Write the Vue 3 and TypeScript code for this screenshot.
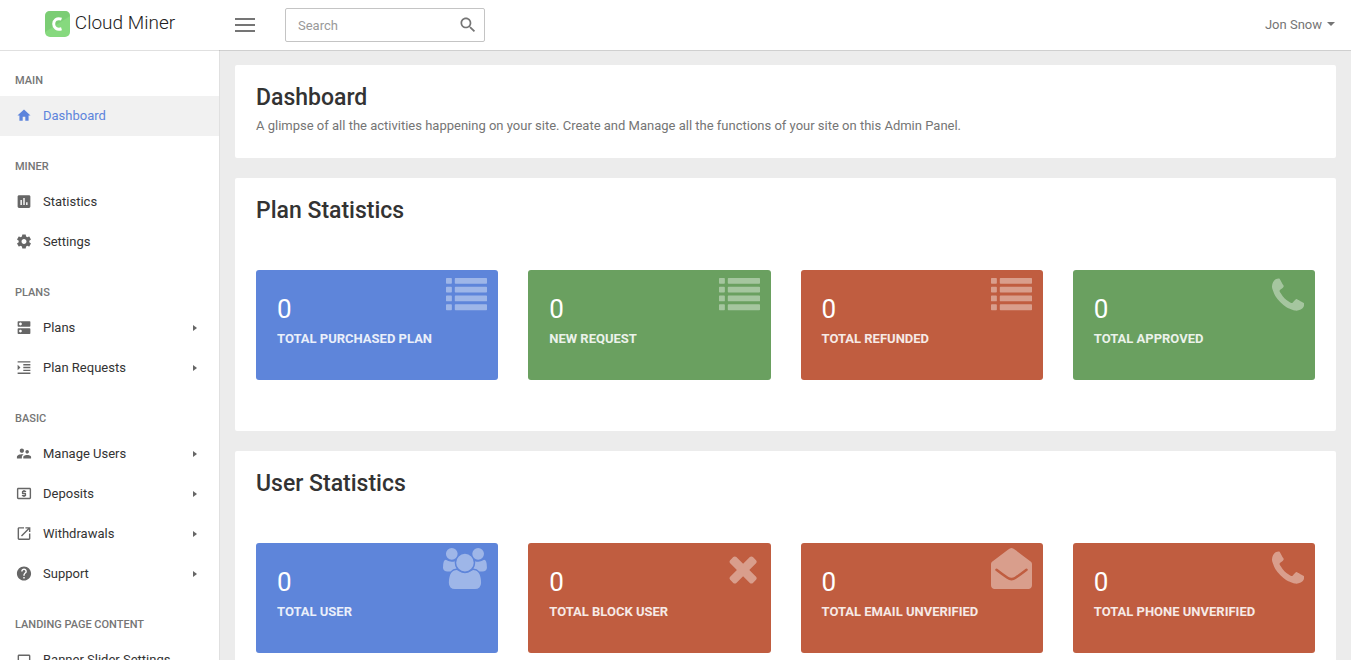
<script setup lang="ts">
import { ref } from 'vue'

interface NavItem {
  label: string
  icon: string
  viewBox?: string
  expandable?: boolean
  active?: boolean
}
interface NavGroup {
  title: string
  items: NavItem[]
}
type Glyph = 'list' | 'phone' | 'users' | 'times' | 'mail'
interface Stat {
  label: string
  value: number
  tone: 'blue' | 'green' | 'red'
  glyph: Glyph
}
interface Section {
  title: string
  stats: Stat[]
}

const query = ref('')

const groups: NavGroup[] = [
  {
    title: 'Main',
    items: [
      {
        label: 'Dashboard',
        icon: 'M10 20v-6h4v6h5v-8h3L12 3 2 12h3v8z',
        viewBox: '-1 -1 26 26',
        active: true,
      },
    ],
  },
  {
    title: 'Miner',
    items: [
      {
        label: 'Statistics',
        icon: 'M19 3H5c-1.100 0-2 .9-2 2v14c0 1.100.9 2 2 2h14c1.100 0 2-.9 2-2V5c0-1.100-.9-2-2-2zM9 17H7v-7h2v7zm4 0h-2V7h2v10zm4 0h-2v-4h2v4z',
      },
      {
        label: 'Settings',
        icon: 'M19.430 12.980c.04-.32.07-.64.07-.98s-.03-.66-.07-.98l2.110-1.650c.19-.15.24-.42.12-.64l-2-3.460c-.12-.22-.39-.3-.61-.22l-2.490 1c-.52-.4-1.080-.73-1.690-.98l-.38-2.650C14.460 2.180 14.250 2 14 2h-4c-.25 0-.46.18-.49.42l-.38 2.650c-.61.25-1.170.59-1.690.98l-2.490-1c-.23-.09-.49 0-.61.22l-2 3.460c-.13.22-.07.49.12.64l2.110 1.650c-.04.32-.07.65-.07.98s.03.66.07.98l-2.110 1.650c-.19.15-.24.42-.12.64l2 3.460c.12.22.39.3.61.22l2.490-1c.52.4 1.080.73 1.690.98l.38 2.650c.03.24.24.42.49.42h4c.25 0 .46-.18.49-.42l.38-2.650c.61-.25 1.170-.59 1.690-.98l2.490 1c.23.09.49 0 .61-.22l2-3.460c.12-.22.07-.49-.12-.64l-2.110-1.650zM12 15.500c-1.930 0-3.500-1.570-3.500-3.500s1.570-3.500 3.500-3.500 3.500 1.570 3.500 3.500-1.570 3.500-3.500 3.500z',
      },
    ],
  },
  {
    title: 'Plans',
    items: [
      {
        label: 'Plans',
        expandable: true,
        icon: 'M20 13H4c-.55 0-1 .45-1 1v6c0 .55.45 1 1 1h16c.55 0 1-.45 1-1v-6c0-.55-.45-1-1-1zM7 19c-1.100 0-2-.9-2-2s.9-2 2-2 2 .9 2 2-.9 2-2 2zM20 3H4c-.55 0-1 .45-1 1v6c0 .55.45 1 1 1h16c.55 0 1-.45 1-1V4c0-.55-.45-1-1-1zM7 9c-1.100 0-2-.9-2-2s.9-2 2-2 2 .9 2 2-.9 2-2 2z',
      },
      {
        label: 'Plan Requests',
        expandable: true,
        icon: 'M3 21h18v-2H3v2zM3 8v8l4-4-4-4zm8 9h10v-2H11v2zM3 3v2h18V3H3zm8 6h10V7H11v2zm0 4h10v-2H11v2z',
      },
    ],
  },
  {
    title: 'Basic',
    items: [
      {
        label: 'Manage Users',
        expandable: true,
        icon: 'M16.500 12c1.380 0 2.490-1.120 2.490-2.500S17.880 7 16.500 7C15.120 7 14 8.120 14 9.500s1.120 2.500 2.500 2.500zM9 11c1.660 0 2.990-1.340 2.990-3S10.660 5 9 5C7.340 5 6 6.340 6 8s1.340 3 3 3zm7.500 3c-1.830 0-5.500.92-5.500 2.750V19h11v-2.250c0-1.830-3.670-2.750-5.500-2.750zM9 13c-2.330 0-7 1.170-7 3.500V19h7v-2.250c0-.85.33-2.340 2.370-3.470C10.500 13.100 9.660 13 9 13z',
      },
      {
        label: 'Deposits',
        expandable: true,
        icon: 'M11 17h2v-1h1c.55 0 1-.45 1-1v-3c0-.55-.45-1-1-1h-3v-1h4V8h-2V7h-2v1h-1c-.55 0-1 .45-1 1v3c0 .55.45 1 1 1h3v1H9v2h2v1zm9-13H4c-1.110 0-1.990.89-1.990 2L2 18c0 1.110.89 2 2 2h16c1.110 0 2-.89 2-2V6c0-1.110-.89-2-2-2zm0 14H4V6h16v12z',
      },
      {
        label: 'Withdrawals',
        expandable: true,
        icon: 'M19 19H5V5h7V3H5c-1.110 0-2 .9-2 2v14c0 1.100.89 2 2 2h14c1.100 0 2-.9 2-2v-7h-2v7zM14 3v2h3.590l-9.830 9.830 1.410 1.410L19 6.410V10h2V3h-7z',
      },
      {
        label: 'Support',
        expandable: true,
        icon: 'M12 2C6.480 2 2 6.480 2 12s4.480 10 10 10 10-4.480 10-10S17.520 2 12 2zm1 17h-2v-2h2v2zm2.070-7.750l-.9.92C13.450 12.900 13 13.500 13 15h-2v-.5c0-1.100.45-2.100 1.170-2.830l1.240-1.260c.37-.36.59-.86.59-1.410 0-1.100-.9-2-2-2s-2 .9-2 2H8c0-2.210 1.790-4 4-4s4 1.790 4 4c0 .88-.36 1.680-.93 2.250z',
      },
    ],
  },
  {
    title: 'Landing Page Content',
    items: [
      {
        label: 'Banner Slider Settings',
        icon: 'M5 5c-1.100 0-2 .9-2 2v10c0 1.100.9 2 2 2h14c1.100 0 2-.9 2-2V7c0-1.100-.9-2-2-2H5zm0 2h14v10H5V7z',
      },
    ],
  },
]

const sections: Section[] = [
  {
    title: 'Plan Statistics',
    stats: [
      { label: 'Total Purchased Plan', value: 0, tone: 'blue', glyph: 'list' },
      { label: 'New Request', value: 0, tone: 'green', glyph: 'list' },
      { label: 'Total Refunded', value: 0, tone: 'red', glyph: 'list' },
      { label: 'Total Approved', value: 0, tone: 'green', glyph: 'phone' },
    ],
  },
  {
    title: 'User Statistics',
    stats: [
      { label: 'Total User', value: 0, tone: 'blue', glyph: 'users' },
      { label: 'Total Block User', value: 0, tone: 'red', glyph: 'times' },
      { label: 'Total Email Unverified', value: 0, tone: 'red', glyph: 'mail' },
      { label: 'Total Phone Unverified', value: 0, tone: 'red', glyph: 'phone' },
    ],
  },
]

const glyphs: Record<Glyph, { viewBox: string; path: string; crease?: string }> = {
  list: {
    viewBox: '0 0 1792 1792',
    path: 'M32 128h192q32 0 32 32v192q0 32-32 32H32q-32 0-32-32V160q0-32 32-32zM416 128h1344q32 0 32 32v192q0 32-32 32H416q-32 0-32-32V160q0-32 32-32zM32 512h192q32 0 32 32v192q0 32-32 32H32q-32 0-32-32V544q0-32 32-32zM416 512h1344q32 0 32 32v192q0 32-32 32H416q-32 0-32-32V544q0-32 32-32zM32 896h192q32 0 32 32v192q0 32-32 32H32q-32 0-32-32V928q0-32 32-32zM416 896h1344q32 0 32 32v192q0 32-32 32H416q-32 0-32-32V928q0-32 32-32zM32 1280h192q32 0 32 32v192q0 32-32 32H32q-32 0-32-32v-192q0-32 32-32zM416 1280h1344q32 0 32 32v192q0 32-32 32H416q-32 0-32-32v-192q0-32 32-32z',
  },
  phone: {
    viewBox: '192 -24 1408 1792',
    path: 'M1600 1240q0 27-10 70.500t-21 68.500q-21 50-122 106-94 51-186 51-27 0-53-3.500t-57.500-12.500-47-14.500-55.500-20.500-49-18q-98-35-175-83-127-79-264-216t-216-264q-48-77-83-175-3-9-18-49t-20.500-55.500-14.500-47-12.500-57.500-3.500-53q0-92 51-186 56-101 106-122 25-11 68.500-21t70.500-10q14 0 21 3 18 6 53 76 11 19 30 54t35 63.500 31 53.500q3 4 17.500 25t21.500 35.500 7 28.500q0 20-28.500 50t-62 55-62 53-28.500 46q0 9 5 22.500t8.500 20.500 14 24 11.500 19q76 137 174 235t235 174q2 1 19 11.500t24 14 20.500 8.500 22.500 5q18 0 46-28.500t53-62 55-62 50-28.500q14 0 28.500 7t35.500 21.500 25 17.500q25 15 53.500 31t63.500 35 54 30q70 35 76 53 3 7 3 21z',
  },
  users: {
    viewBox: '64 0 1920 1792',
    path: 'M657 896q-162 5-265 128h-134q-82 0-138-40.500t-56-118.500q0-353 124-353 6 0 43.500 21t97.500 42.500 119 21.500q67 0 133-23-5 37-5 66 0 139 81 256zm1071 637q0 120-73 189.500t-194 69.500h-874q-121 0-194-69.500t-73-189.500q0-53 3.500-103.500t14-109 26.500-108.500 43-97.500 62-81 85.500-53.500 111.500-20q10 0 43 21.500t73 48 107 48 135 21.500 135-21.500 107-48 73-48 43-21.500q61 0 111.500 20t85.500 53.500 62 81 43 97.500 26.500 108.500 14 109 3.500 103.500zm-1024-1277q0 106-75 181t-181 75-181-75-75-181 75-181 181-75 181 75 75 181zm704 384q0 159-112.500 271.500t-271.500 112.500-271.500-112.500-112.500-271.500 112.500-271.500 271.500-112.500 271.500 112.500 112.500 271.500zm576 225q0 78-56 118.500t-138 40.500h-134q-103-123-265-128 81-117 81-256 0-29-5-66 66 23 133 23 59 0 119-21.500t97.500-42.500 43.500-21q124 0 124 353zm-128-609q0 106-75 181t-181 75-181-75-75-181 75-181 181-75 181 75 75 181z',
  },
  times: {
    viewBox: '192 0 1408 1792',
    path: 'M1490 1322q0 40-28 68l-136 136q-28 28-68 28t-68-28l-294-294-294 294q-28 28-68 28t-68-28l-136-136q-28-28-28-68t28-68l294-294-294-294q-28-28-28-68t28-68l136-136q28-28 68-28t68 28l294 294 294-294q28-28 68-28t68 28l136 136q28 28 28 68t-28 68l-294 294 294 294q28 28 28 68z',
  },
  mail: {
    viewBox: '0 0 1792 1792',
    path: 'M160 1792q-66 0-113-47T0 1632V700q0-60 46-96Q430 310 740 75q90-75 156-75t156 75q310 235 694 529 46 36 46 96v932q0 66-47 113t-113 47z',
    crease: 'M240 950Q470 1130 720 1300q176 120 352 0 250-170 480-350',
  },
}
</script>

<template>
  <div class="shell">
    <header class="topbar">
      <a class="brand" href="#">
        <svg class="brand-mark" viewBox="0 0 25 26" aria-hidden="true">
          <rect width="25" height="26" rx="5" fill="#86d97e" />
          <path d="M5 0h15q5 0 5 5L0 21V5q0-5 5-5z" fill="#74c56e" opacity=".6" />
          <path d="M16.500 8.200C11.500 6.500 8.700 9.500 8.700 13s3 6.300 7.800 4.800" fill="none" stroke="#fff" stroke-width="3" />
        </svg>
        <span>Cloud Miner</span>
      </a>
      <button class="burger" type="button" aria-label="Toggle menu">
        <i></i><i></i><i></i>
      </button>
      <form class="search" role="search" @submit.prevent>
        <input v-model="query" type="text" placeholder="Search" aria-label="Search" />
        <button type="submit" aria-label="Submit search">
          <svg viewBox="0 0 24 24" aria-hidden="true">
            <path d="M15.500 14h-.79l-.28-.27C15.410 12.590 16 11.110 16 9.500 16 5.910 13.090 3 9.500 3S3 5.910 3 9.500 5.910 16 9.500 16c1.610 0 3.090-.59 4.230-1.570l.27.28v.79l5 4.990L20.490 19l-4.990-5zm-6 0C7.010 14 5 11.990 5 9.500S7.010 5 9.500 5 14 7.010 14 9.500 11.990 14 9.500 14z" />
          </svg>
        </button>
      </form>
      <button class="account" type="button">Jon Snow<span class="caret"></span></button>
    </header>

    <div class="body">
      <nav class="sidebar" aria-label="Main navigation">
        <section v-for="group in groups" :key="group.title">
          <h6>{{ group.title }}</h6>
          <ul>
            <li v-for="item in group.items" :key="item.label">
              <a href="#" :class="{ active: item.active }">
                <svg :viewBox="item.viewBox ?? '0 0 24 24'" aria-hidden="true"><path :d="item.icon" /></svg>
                <span class="label">{{ item.label }}</span>
                <span v-if="item.expandable" class="arrow"></span>
              </a>
            </li>
          </ul>
        </section>
      </nav>

      <main class="content">
        <section class="panel">
          <h1>Dashboard</h1>
          <p>A glimpse of all the activities happening on your site. Create and Manage all the functions of your site on this Admin Panel.</p>
        </section>
        <section v-for="section in sections" :key="section.title" class="panel">
          <h2>{{ section.title }}</h2>
          <div class="cards">
            <article v-for="stat in section.stats" :key="stat.label" class="card" :class="stat.tone">
              <svg class="glyph" :viewBox="glyphs[stat.glyph].viewBox" aria-hidden="true">
                <path :d="glyphs[stat.glyph].path" />
                <path v-if="glyphs[stat.glyph].crease" class="crease" :d="glyphs[stat.glyph].crease" />
              </svg>
              <div class="value">{{ stat.value }}</div>
              <div class="caption">{{ stat.label }}</div>
            </article>
          </div>
        </section>
      </main>
    </div>
  </div>
</template>

<style>
body {
  margin: 0;
  background: #ececec;
}
</style>

<style scoped>
* {
  box-sizing: border-box;
}
.shell {
  display: flex;
  flex-direction: column;
  height: 100vh;
  overflow: hidden;
  font-family: Roboto, "Liberation Sans", sans-serif;
  font-size: 13px;
  color: #757575;
}
button {
  padding: 0;
  border: 0;
  background: none;
  font: inherit;
  color: inherit;
  cursor: pointer;
}
a {
  color: inherit;
  text-decoration: none;
}

.topbar {
  position: relative;
  z-index: 1;
  flex: none;
  display: flex;
  align-items: center;
  height: 50px;
  padding-right: 16px;
  background: #fff;
  box-shadow: 0 1px 0 rgba(0, 0, 0, 0.12);
}
.brand {
  display: flex;
  justify-content: center;
  align-items: flex-start;
  gap: 5px;
  width: 220px;
  height: 50px;
  padding-top: 11px;
  font-size: 19px;
  font-weight: 300;
  line-height: 24px;
  color: #212121;
}
.brand-mark {
  width: 25px;
  height: 26px;
}
.burger {
  display: grid;
  gap: 4px;
  width: 20px;
  margin: 0 30px 0 15px;
}
.burger i {
  height: 2px;
  background: #757575;
}
.search {
  display: flex;
  align-items: center;
  width: 200px;
  height: 34px;
  border: 1px solid #c4c4c4;
  border-radius: 2px;
}
.search input {
  flex: 1;
  min-width: 0;
  padding: 0 12px;
  border: 0;
  outline: 0;
  background: none;
  font: inherit;
  color: #424242;
}
.search input::placeholder {
  color: #999;
  opacity: 1;
}
.search button {
  width: 20px;
  height: 20px;
  margin-right: 6px;
}
.search svg {
  display: block;
  width: 20px;
  height: 20px;
  fill: #757575;
}
.account {
  display: flex;
  align-items: center;
  gap: 5px;
  height: 48px;
  margin-left: auto;
  align-self: flex-start;
}
.caret {
  border: 4px solid transparent;
  border-top-color: #757575;
  border-bottom: 0;
}

.body {
  flex: 1;
  display: flex;
  min-height: 0;
}
.sidebar {
  flex: none;
  width: 220px;
  overflow: hidden;
  border-right: 1px solid #e0e0e0;
  background: #fff;
}
.sidebar h6 {
  margin: 0;
  padding: 21px 15px 5px;
  font-size: 11px;
  font-weight: 500;
  line-height: 20px;
  text-transform: uppercase;
  color: #757575;
}
.sidebar ul {
  margin: 0;
  padding: 0;
  list-style: none;
}
.sidebar a {
  display: flex;
  align-items: center;
  height: 40px;
  padding: 0 22px 1px 15px;
  color: #333;
}
.sidebar svg {
  width: 18px;
  height: 17px;
  margin-right: 10px;
  fill: #666;
}
.sidebar .label {
  flex: 1;
  line-height: 19px;
  white-space: nowrap;
}
.sidebar a.active {
  background: #f1f1f1;
  color: #5d84dc;
}
.sidebar a.active svg {
  fill: #5d84dc;
}
.arrow {
  border: 3px solid transparent;
  border-left: 4px solid #666;
  border-right: 0;
}

.content {
  flex: 1;
  min-width: 0;
  padding: 15px;
  overflow: hidden;
}
.panel {
  margin-bottom: 20px;
  padding: 21px;
  border-radius: 2px;
  background: #fff;
}
.panel h1,
.panel h2 {
  margin: 0;
  font-size: 23px;
  font-weight: 500;
  line-height: 24px;
  color: #333;
}
.panel p {
  margin: 5px 0 0;
  line-height: 22px;
}
.cards {
  display: grid;
  grid-template-columns: repeat(4, 1fr);
  gap: 30px;
  margin: 47px 0 30px;
}
.card {
  position: relative;
  height: 110px;
  padding: 24px 21px;
  border-radius: 3px;
  background: var(--tone);
  color: #fff;
}
.blue {
  --tone: #5e85da;
}
.green {
  --tone: #6aa060;
}
.red {
  --tone: #c05d40;
}
.glyph {
  position: absolute;
  top: 5px;
  right: 11px;
  height: 41px;
  fill: #fff;
  opacity: 0.4;
}
.crease {
  fill: none;
  stroke: var(--tone);
  stroke-width: 110px;
  stroke-linecap: round;
}
.value {
  font-size: 26px;
  font-weight: 400;
  line-height: 30px;
}
.caption {
  margin-top: 5px;
  font-weight: 700;
  line-height: 20px;
  text-transform: uppercase;
  opacity: 0.87;
}
</style>
